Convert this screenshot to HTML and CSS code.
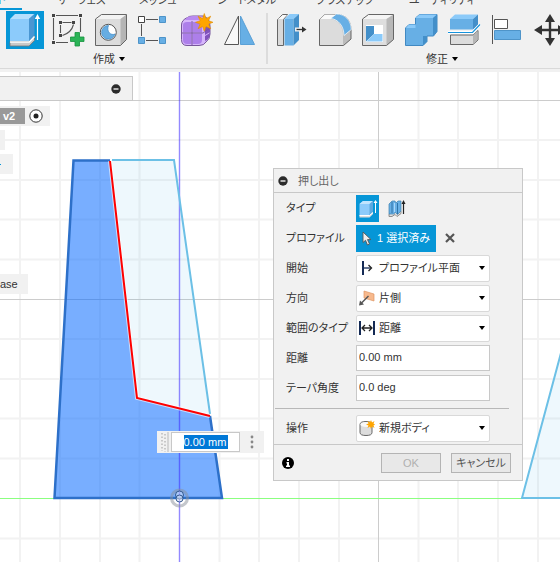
FILE: index.html
```html
<!DOCTYPE html>
<html lang="ja">
<head>
<meta charset="utf-8">
<title>押し出し</title>
<link rel="stylesheet" href="styles.css">
</head>
<body>
<div class="app">
  <header class="toolbar">
    <nav class="tabs">
      <a class="tab tab-active" href="#">ソリッド</a>
      <a class="tab" href="#">サーフェス</a>
      <a class="tab" href="#">メッシュ</a>
      <a class="tab" href="#">シートメタル</a>
      <a class="tab" href="#">プラスチック</a>
      <a class="tab" href="#">ユーティリティ</a>
    </nav>
    <div class="groups">
      <section class="group">
        <div class="tools">
          <button class="tool tool-active" aria-label="押し出し">
            <svg viewBox="0 0 38 38"><path d="M4 30.500h19l5.500-6v5L23 35H4z" fill="#c9c9c9" stroke="#777" stroke-width=".8"/><path d="M4 8h19v22H4z" fill="#8ccbfb"/><path d="M4 8l5-5h19.500L23 8z" fill="#b5dffd"/><path d="M23 8l5.500-5v22L23 30z" fill="#4a96d2"/><path d="M4 31h19.300l5.200-5.500" fill="none" stroke="#fff" stroke-width="1.500"/><path d="M31.500 29V6" stroke="#fff" stroke-width="1.200"/><path d="M31.500 3l2.700 5h-5.400z" fill="#fff"/></svg>
          </button>
          <button class="tool" aria-label="スケッチを作成">
            <svg viewBox="0 0 38 38"><path d="M7 4.500h22M4.500 7v22M31.500 7v14M7 31.500h12M13.500 11.500h9M11.500 14v8M24.500 13.500q-2 8-11 11" fill="none" stroke="#555" stroke-width="1.100"/><path d="M3 3h3v3H3zM30 3h3v3h-3zM3 30h3v3H3zM10 10h3v3h-3zM23 10h3v3h-3zM10 23h3v3h-3z" fill="#444"/><path d="M26 21.500h4.500V26H35v4.500h-4.500V35H26v-4.500h-4.500V26H26z" fill="#2bb457" stroke="#16923f" stroke-width=".8"/></svg>
          </button>
          <button class="tool" aria-label="穴">
            <svg viewBox="0 0 38 38"><path d="M3.500 8l6-4.500h25v25l-6 6h-25z" fill="#dcdcdc"/><path d="M3.500 8l6-4.500h25l-6 4.500z" fill="#f3f3f3"/><path d="M28.500 8l6-4.500v25l-6 6z" fill="#b5b5b5"/><path d="M3.500 8l6-4.500h25v25l-6 6h-25z" fill="none" stroke="#666"/><circle cx="16.300" cy="21.300" r="8" fill="#fff" stroke="#555"/><path d="M16.500 14.500a6.800 6.800 0 1 0 6.500 8.500c-4 2-9-2.500-6.500-8.500z" fill="#67ade2" stroke="#3987c4" stroke-width=".7"/></svg>
          </button>
          <button class="tool" aria-label="パターン">
            <svg viewBox="0 0 38 38"><path d="M11 8.500h12M6.500 13v12M11 29.500h12" stroke="#555"/><path d="M3.500 5.500h6v6h-6z" fill="#fff" stroke="#444"/><path d="M24.500 5.500h6v6h-6zM3.500 26.500h6v6h-6zM24.500 26.500h6v6h-6z" fill="#67afe5" stroke="#4e94c9"/></svg>
          </button>
          <button class="tool" aria-label="フォームを作成">
            <svg viewBox="0 0 38 38"><path d="M3.500 14q0-5 6-7.500Q11 5 15 5h10q7 2 7 10v8q0 5-4 8-2 3.500-7 3.500H9q-5.500 0-5.500-6z" fill="#d6b6fb" stroke="#77569b"/><path d="M9 6.500Q11 5 15 5h9l-3 4H7z" fill="#b98af0"/><path d="M5 14q0-3 4-3h4.500v10.500H5zM14.500 11H20q4 0 4 4v6.500h-9.500zM5 22.500h8.500V33H9q-4 0-4-4zM14.500 22.500H24V29q0 4-4 4h-5.500z" fill="#ad7fea"/><path d="M27 16l5-3v8l-5 3zM27 25l5-3q0 6-5 8z" fill="#8151bd"/><path d="M14 10v24M4 22h21l7-5" fill="none" stroke="#77569b" stroke-width=".9"/><path d="M26.300 2.500l1.700 5 4.700-2.300-2.200 4.500 4.500 1.600-4.500 1.700 2.200 4.700-4.700-2.200-1.700 4.700-1.700-4.700-4.500 2.200 2.100-4.700-4.700-1.700 4.700-1.600-2.100-4.500 4.500 2.300z" fill="#ffa500" stroke="#e18b00" stroke-width=".6"/></svg>
          </button>
          <button class="tool" aria-label="ミラー">
            <svg viewBox="0 0 38 38"><path d="M17.500 5v28.500h-14z" fill="#f8f8f8" stroke="#555"/><path d="M19.500 5v28.500h14z" fill="#67afe5" stroke="#5aa0d6"/></svg>
          </button>
        </div>
        <button class="group-label label-create">作成<svg viewBox="0 0 6 4"><path d="M0 0h6L3 4z"/></svg></button>
      </section>
      <section class="group">
        <div class="tools">
          <button class="tool" aria-label="プレス/プル">
            <svg viewBox="0 0 38 38"><path d="M4.500 8.500l5-5h5l-4 5v26h-6z" fill="#d9d9d9" stroke="#666"/><path d="M5 8l5-4h4l-4 4z" fill="#fafafa"/><path d="M11.500 8h9v26.500h-9z" fill="#67afe5"/><path d="M11.500 8l5-5h9.500l-5.500 5z" fill="#8bcaf9"/><path d="M20.500 8L26 3v26l-5.500 5.500z" fill="#438fc9"/><path d="M22 16.500h7V13l6 5.500-6 5.500v-3.500h-7z" fill="#f1f1f1"/><path d="M23.500 18.500H30" stroke="#333" stroke-width="1.300"/><path d="M29 15.500l4.500 3-4.500 3z" fill="#333"/></svg>
          </button>
          <button class="tool" aria-label="フィレット">
            <svg viewBox="0 0 38 38"><path d="M3.500 8.500l5.500-5h12C30 3.500 35 10 35 18.500V28l-7.500 6.500h-24z" fill="#bcbcbc" stroke="#666"/><path d="M3.500 8.500l5.500-5h11l-5 5z" fill="#fafafa"/><path d="M4 8.500h11c7 0 12 7 12 15.500v10H4z" fill="#dcdcdc"/><path d="M14.500 7.500L20.500 3C29 3 35 9 35.300 18.500L28 24.500C28 15 22 8 14.500 7.500z" fill="#67afe5" stroke="#fff" stroke-width=".7"/></svg>
          </button>
          <button class="tool" aria-label="シェル">
            <svg viewBox="0 0 38 38"><path d="M3.500 8l6-4.500h25v25l-7 6h-24z" fill="#dedede"/><path d="M3.500 8l6-4.500h25l-7 4.500z" fill="#f5f5f5"/><path d="M27.500 8l7-4.500v25l-7 6z" fill="#b8b8b8"/><path d="M3.500 8l6-4.500h25v25l-7 6h-24z" fill="none" stroke="#666"/><path d="M7 14h17v17H7z" fill="#fff"/><path d="M7 15h8v8l-8 7.500z" fill="#438fc9"/><path d="M15 23h8.500v7.500H7.500z" fill="#8bcaf9"/></svg>
          </button>
          <button class="tool" aria-label="結合">
            <svg viewBox="0 0 38 38"><path d="M3.500 17L7 13.500h6.500V7l4-3.500H35v17L31.500 25H25v5.500l-4 4H3.500z" fill="#67afe5" stroke="#4189c2"/><path d="M13.500 7l4-3.500H35L31 7zM4 17l3-3.500h6.500V17z" fill="#8bcaf9"/><path d="M31 7l4-3.500v17L31 25zM21 25h4v5.500l-4 4z" fill="#438fc9"/></svg>
          </button>
          <button class="tool" aria-label="ボディを分割">
            <svg viewBox="0 0 38 38"><path d="M5 8h23v10.500H5z" fill="#67afe5"/><path d="M5 8l5-4.500h23L28 8z" fill="#8bcaf9"/><path d="M28 8l5-4.500v11l-5 4z" fill="#438fc9"/><path d="M5.500 24H28l5-4.500V29l-5 4.500H5.500z" fill="#dcdcdc" stroke="#666"/><path d="M28 24l4.500-4v9L28 33z" fill="#b5b5b5"/><path d="M3 21.500h24.500l7.500-8" fill="none" stroke="#fff" stroke-width="3"/><path d="M3 21.500h24.500l7.500-8" fill="none" stroke="#1593dc" stroke-width="1.200"/></svg>
          </button>
          <button class="tool" aria-label="位置合わせ">
            <svg viewBox="0 0 38 38"><path d="M4.500 4v29" stroke="#555"/><path d="M6.500 8.500h13v9h-13z" fill="#fff" stroke="#555"/><path d="M6.500 19.500h26v9h-26z" fill="#67afe5" stroke="#4e94c9"/></svg>
          </button>
          <button class="tool" aria-label="移動">
            <svg viewBox="0 0 38 38"><path d="M19 8v22M8 19h22" stroke="#333" stroke-width="2.400"/><path d="M19 3l5 8H14zM19 35l5-8H14zM3 19l8-5v10zM35 19l-8-5v10z" fill="#333"/></svg>
          </button>
        </div>
        <button class="group-label label-modify">修正<svg viewBox="0 0 6 4"><path d="M0 0h6L3 4z"/></svg></button>
      </section>
    </div>
  </header>

  <main class="canvas">
    <svg class="scene" aria-hidden="true">
      <g transform="translate(0 -72)">
        <path class="grid-minor" d="M20 0v2000M60 0v2000M100 0v2000M139.500 0v2000M219.500 0v2000M259 0v2000M299 0v2000M339 0v2000M418.500 0v2000M458 0v2000M498 0v2000M538 0v2000M0 140h3000M0 180h3000M0 219.500h3000M0 259.500h3000M0 339h3000M0 379h3000M0 418.500h3000M0 458.500h3000M0 538.500h3000"/>
        <path class="grid-major" d="M378.500 0v2000M0 100.500h3000M0 299.500h3000"/>
        <path class="axis-x" d="M0 498.500h3000"/>
        <path class="profile-open" d="M110 160h64l36 256-73-18z"/>
        <path class="profile-selected" d="M73.500 160.500H110L137 398l73 18 12 82H54.500z"/>
        <path class="axis-y" d="M179.500 0v2000"/>
        <path class="edge-open" d="M112 160h62l36 254"/>
        <path class="edge-selected" d="M110 160.500H73.500L54.500 498H222l-12-82"/>
        <path class="edge-halo" d="M110 161l27 237 73 18"/>
        <path class="edge-red" d="M110 161l27 237 73 18"/>
        <path class="profile-open" d="M522 498.500L576 297v201.500z"/>
        <path class="edge-open" d="M576 297l-54 201h3000"/>
        <circle cx="179.500" cy="498" r="8" fill="none" stroke="#8a8f99" stroke-opacity=".5" stroke-width="3"/>
        <g fill="#dfe7f5" fill-opacity=".5" stroke="#31588f"><circle cx="179.500" cy="495" r="4"/><circle cx="179.500" cy="498.500" r="3.500"/></g>
      </g>
    </svg>

    <aside class="browser">
      <div class="browser-head">
        <button class="collapse" aria-label="折りたたむ"><svg viewBox="0 0 10 10"><circle cx="5" cy="5" r="4.700" fill="#2b2b2b"/><path d="M2.500 5h5" stroke="#fff" stroke-width="1.300"/></svg></button>
      </div>
      <div class="node node-root"><b class="version">v2</b><svg class="radio" viewBox="0 0 14 14"><circle cx="7" cy="7" r="6.200" fill="#fff" stroke="#333"/><circle cx="7" cy="7" r="2.500" fill="#222"/></svg></div>
      <div class="node node-short"></div>
      <div class="node node-mid"><span class="dash"></span></div>
      <div class="node node-name">ase</div>
    </aside>

    <div class="value-bar">
      <svg class="grip" viewBox="0 0 12 20"><path d="M5 1v18M8 2v18" stroke="#bbb" stroke-width="1.500" stroke-dasharray="1.500 2"/><path d="M11 0v20" stroke="#d5d5d5" stroke-width="2"/></svg>
      <div class="value-box"><input class="value-input" aria-label="距離" value="0.00 mm"></div>
      <button class="more" aria-label="その他"><svg viewBox="0 0 4 14"><circle cx="2" cy="2" r="1.400"/><circle cx="2" cy="7" r="1.400"/><circle cx="2" cy="12" r="1.400"/></svg></button>
    </div>

    <form class="dialog">
      <div class="dialog-head">
        <button type="button" class="collapse" aria-label="折りたたむ"><svg viewBox="0 0 10 10"><circle cx="5" cy="5" r="4.700" fill="#2b2b2b"/><path d="M2.500 5h5" stroke="#fff" stroke-width="1.300"/></svg></button>
        <span class="dialog-title">押し出し</span>
      </div>
      <div class="dialog-body">
        <div class="row">
          <span class="row-label">タイプ</span>
          <div class="types">
            <button type="button" class="type type-active" aria-label="押し出し"><svg viewBox="0 0 23 27"><path d="M3.500 20h10l3.500-3v2l-3.500 3.500h-10z" fill="#ddd"/><path d="M3.500 9L7 6h10v10.500L13.500 20h-10z" fill="#8ccbfb"/><path d="M3.500 9L7 6h10l-3.500 3z" fill="#c0e4fe"/><path d="M13.500 9L17 6v10.500L13.500 20z" fill="#5ca9e0"/><path d="M3.500 20.500h10l3.500-3" fill="none" stroke="#fff"/><path d="M19.500 7v11" stroke="#fff"/><path d="M19.500 5l2 3h-4z" fill="#fff"/></svg></button>
            <button type="button" class="type" aria-label="薄い押し出し"><svg viewBox="0 0 23 27"><path d="M4 19v2.500h3l3-2 2 2 4-3V16" fill="#ddd" stroke="#777" stroke-width=".8"/><path d="M4 9l3-3h3l1 2 2-2h3v10l-3.500 3.500-2-2-2 1.500H4z" fill="#67afe5" stroke="#3d7fae" stroke-width=".7"/><path d="M7 7v11M12.500 8v11" stroke="#2f73a8"/><path d="M9.500 8v9" stroke="#a8d7fa"/><path d="M18.500 8v11" stroke="#222" stroke-width="1.200"/><path d="M18.500 5l2 4h-4z" fill="#222"/></svg></button>
          </div>
        </div>
        <div class="row">
          <span class="row-label">プロファイル</span>
          <button type="button" class="selection"><svg viewBox="0 0 10 15"><path d="M1 1v10.500l2.500-2.200 2 4.700 2-1-2-4.400H9z" fill="#eee" stroke="#555" stroke-width=".9"/></svg>1 選択済み</button>
          <button type="button" class="clear" aria-label="選択を解除"><svg viewBox="0 0 10 10"><path d="M1 1l8 8M9 1L1 9" stroke="#555" stroke-width="2.200"/></svg></button>
        </div>
        <div class="row">
          <label class="row-label" for="start">開始</label>
          <div class="combo"><svg class="combo-icon" viewBox="0 0 16 16"><path d="M4 1v14" stroke="#142a55" stroke-width="2"/><path d="M5 8h7" stroke="#142a55" stroke-width="1.300"/><path d="M9.500 5L12.500 8l-3 3" fill="none" stroke="#222" stroke-width="1.300"/></svg><select id="start"><option>プロファイル平面</option></select><svg class="arrow" viewBox="0 0 6 4"><path d="M0 0h6L3 4z"/></svg></div>
        </div>
        <div class="row">
          <label class="row-label" for="direction">方向</label>
          <div class="combo"><svg class="combo-icon" viewBox="0 0 16 16"><path d="M5 1l10 3v7L5 8z" fill="#f7b98d" stroke="#de9666" stroke-width=".7"/><path d="M9.500 6l-7 7" stroke="#555" stroke-width="1.400"/><path d="M0 15.500l1-5 4 4z" fill="#555"/></svg><select id="direction"><option>片側</option></select><svg class="arrow" viewBox="0 0 6 4"><path d="M0 0h6L3 4z"/></svg></div>
        </div>
        <div class="row">
          <label class="row-label" for="extent">範囲のタイプ</label>
          <div class="combo"><svg class="combo-icon" viewBox="0 0 16 16"><path d="M1 1v14M15 1v14" stroke="#142a55" stroke-width="2"/><path d="M3 8h10M6 5L3 8l3 3M10 5l3 3-3 3" fill="none" stroke="#222" stroke-width="1.300"/></svg><select id="extent"><option>距離</option></select><svg class="arrow" viewBox="0 0 6 4"><path d="M0 0h6L3 4z"/></svg></div>
        </div>
        <div class="row">
          <label class="row-label" for="distance">距離</label>
          <input class="field" id="distance" value="0.00 mm">
        </div>
        <div class="row">
          <label class="row-label" for="taper">テーパ角度</label>
          <input class="field" id="taper" value="0.0 deg">
        </div>
        <hr class="rule">
        <div class="row">
          <label class="row-label" for="operation">操作</label>
          <div class="combo"><svg class="combo-icon" viewBox="0 0 16 16"><path d="M1 4.500v8q0 3 6 3t6-3v-8q0-3-6-3t-6 3z" fill="#ddd" stroke="#666"/><ellipse cx="7" cy="4.500" rx="5.500" ry="2.500" fill="#f8f8f8"/><path d="M12 0l1 2.500L15.500 1l-1 2.500 1.500 1-1.500 1 1 2.500L13 6.500 12 9l-1-2.500L8.500 8l1-2.500L7 4.500l2.500-1-1-2.500L11 2.500z" fill="#ffa500"/></svg><select id="operation"><option>新規ボディ</option></select><svg class="arrow" viewBox="0 0 6 4"><path d="M0 0h6L3 4z"/></svg></div>
        </div>
      </div>
      <div class="dialog-foot">
        <svg class="info" viewBox="0 0 12 12"><circle cx="6" cy="6" r="6"/><path d="M5 2h2v2H5zM4.500 5H7v3.500h1V10H4V8.500h1v-2h-.500z" fill="#fff"/></svg>
        <button type="button" class="btn btn-ok" disabled>OK</button>
        <button type="button" class="btn btn-cancel">キャンセル</button>
      </div>
    </form>
  </main>
</div>
</body>
</html>
```
FILE: styles.css
```css
* {
  box-sizing: border-box;
}

body {
  margin: 0;
  background: #fff;
  color: #333;
  font-family: "Liberation Sans", "Noto Sans CJK JP", sans-serif;
  font-size: 11px;
  line-height: 16px;
  font-feature-settings: "palt";
}

button,
input,
select {
  margin: 0;
  padding: 0;
  border: 0;
  border-radius: 0;
  background: none;
  color: inherit;
  font: inherit;
  font-feature-settings: inherit;
}

svg {
  display: block;
}

.app {
  display: flex;
  flex-direction: column;
  min-height: 100vh;
  overflow: hidden;
}

/* Toolbar */
.toolbar {
  flex: none;
  background: #f1f1f1;
  border-bottom: 3px solid #f1f1f1;
  box-shadow: inset 0 -1px #d9d9d9;
  overflow: hidden;
}

.tabs {
  display: grid;
  grid-template-columns: 57px 82px 78px 99px 93px auto;
  margin-top: -8px;
}

.tab {
  color: #444;
  text-decoration: none;
  white-space: nowrap;
}

.tab-active {
  width: 62px;
  margin-left: -40px;
  padding-right: 16px;
  border-bottom: 2px solid #0696d7;
  color: #0696d7;
  text-align: right;
}

.groups {
  display: flex;
  padding-top: 1px;
}

.group {
  flex: none;
  padding: 0 4px;
}

.group + .group {
  padding-left: 5px;
  background: linear-gradient(#dcdcdc, #dcdcdc) 0 2px / 2px 51px no-repeat;
}

.tools {
  display: flex;
}

.tool {
  flex: none;
  width: 43px;
  padding: 0 3px 0 2px;
}

.tool svg {
  width: 38px;
  height: 38px;
}

.tool-active svg {
  background: #0696d7;
}

.group-label {
  display: flex;
  align-items: center;
  gap: 4px;
  margin-top: 2px;
  padding-bottom: 2px;
}

.group-label svg {
  width: 6px;
  height: 4px;
}

.label-create {
  margin-left: 89px;
}

.label-modify {
  margin-left: 155px;
}

/* Modelling canvas */
.canvas {
  position: relative;
  flex: 1;
}

.scene {
  position: absolute;
  inset: 0;
  width: 100%;
  height: 100%;
}

.scene path {
  fill: none;
}

.scene .grid-minor {
  stroke: #f2f2f2;
  stroke-width: 2;
}

.scene .grid-major {
  stroke: #ccc;
}

.scene .axis-x {
  stroke: #8bff80;
}

.scene .axis-y {
  stroke: #3c28ff;
  stroke-opacity: 0.55;
  stroke-width: 1.4;
}

.scene .profile-open {
  fill: #46b4eb;
  fill-opacity: 0.09;
}

.scene .profile-selected {
  fill: #0066ff;
  fill-opacity: 0.53;
}

.scene .edge-open {
  stroke: #6cc0e6;
  stroke-width: 2;
}

.scene .edge-selected {
  stroke: #2d70c9;
  stroke-width: 2.5;
}

.scene .edge-halo {
  stroke: #fff;
  stroke-opacity: 0.6;
  stroke-width: 4;
}

.scene .edge-red {
  stroke: #f00;
  stroke-width: 2;
}

/* Browser tree */
.browser {
  position: absolute;
  top: 4px;
  left: 0;
  width: 133px;
}

.browser-head {
  display: flex;
  align-items: center;
  justify-content: flex-end;
  height: 25px;
  padding-right: 11px;
  border: 1px solid #c8c8c8;
  border-left: 0;
  background: #f1f1f1;
}

.collapse svg {
  width: 10px;
  height: 10px;
}

.node {
  display: flex;
  align-items: center;
  height: 20px;
  margin-top: 4px;
  background: #f1f1f1;
}

.node-root {
  gap: 4px;
  width: 50px;
  margin-top: 5px;
}

.version {
  width: 25px;
  padding-left: 3px;
  background: #999;
  color: #fff;
}

.radio {
  width: 14px;
  height: 14px;
}

.node-short {
  width: 5px;
}

.node-mid {
  width: 13px;
}

.dash {
  width: 1px;
  height: 1px;
  background: #0696d7;
}

.node-name {
  width: 28px;
  margin-top: 100px;
}

/* Floating value input */
.value-bar {
  position: absolute;
  top: 359px;
  left: 157px;
  display: flex;
  align-items: center;
  width: 107px;
  height: 22px;
  background: #f1f1f1;
}

.grip {
  width: 12px;
  height: 20px;
  margin-right: 2px;
}

.value-box {
  display: flex;
  flex: 1;
  align-items: center;
  justify-content: center;
  height: 20px;
  border: 1px solid #c8c8c8;
  background: #fff;
}

.value-input {
  width: 44px;
  height: 14px;
  background: #0078d7;
  color: #fff;
}

.more {
  padding: 0 10px;
}

.more svg {
  width: 4px;
  height: 14px;
  fill: #888;
}

/* Extrude dialog */
.dialog {
  position: absolute;
  top: 96px;
  left: 273px;
  width: 250px;
  border: 1px solid #c8c8c8;
  background: #f1f1f1;
}

.dialog-head {
  display: flex;
  align-items: center;
  gap: 10px;
  height: 24px;
  padding-left: 4px;
  border-bottom: 1px solid #c8c8c8;
}

.dialog-title {
  color: #666;
}

.dialog-body {
  padding-bottom: 1px;
}

.row {
  display: flex;
  align-items: center;
  height: 30px;
  padding: 0 32px 0 12px;
}

.row-label {
  flex: none;
  width: 70px;
  white-space: nowrap;
}

.types {
  display: flex;
  gap: 6px;
}

.type svg {
  width: 23px;
  height: 27px;
}

.type-active {
  background: #0696d7;
}

.selection {
  display: flex;
  align-items: center;
  gap: 5px;
  height: 27px;
  padding: 0 6px;
  background: #0696d7;
  color: #fff;
  white-space: nowrap;
}

.selection svg {
  width: 10px;
  height: 15px;
}

.clear {
  margin-left: 9px;
}

.clear svg {
  width: 10px;
  height: 10px;
}

.combo {
  display: flex;
  flex: 1;
  align-items: center;
  height: 27px;
  padding: 0 4px 0 2px;
  border: 1px solid #d9d9d9;
  border-radius: 2px;
  background: #fff;
}

.combo-icon {
  flex: none;
  width: 16px;
  height: 16px;
  margin-right: 4px;
}

.combo select {
  flex: 1;
  min-width: 0;
  appearance: none;
}

.arrow {
  flex: none;
  width: 6px;
  height: 4px;
}

.field {
  flex: 1;
  min-width: 0;
  height: 26px;
  padding: 0 2px 2px;
  border: 1px solid #c8c8c8;
  background: #fff;
}

.rule {
  height: 1px;
  margin: 5px 13px 4px 1px;
  border: 0;
  background: #b8b8b8;
}

.dialog-foot {
  display: flex;
  align-items: center;
  gap: 10px;
  height: 36px;
  padding: 0 11px 0 8px;
  border-top: 1px solid #c8c8c8;
}

.info {
  width: 12px;
  height: 12px;
  margin-right: auto;
}

.btn {
  width: 60px;
  height: 20px;
  border: 1px solid #b4b4b4;
  background: #e8e8e8;
  color: #555;
  white-space: nowrap;
}

.btn-ok {
  color: #b0b0b0;
}
```
